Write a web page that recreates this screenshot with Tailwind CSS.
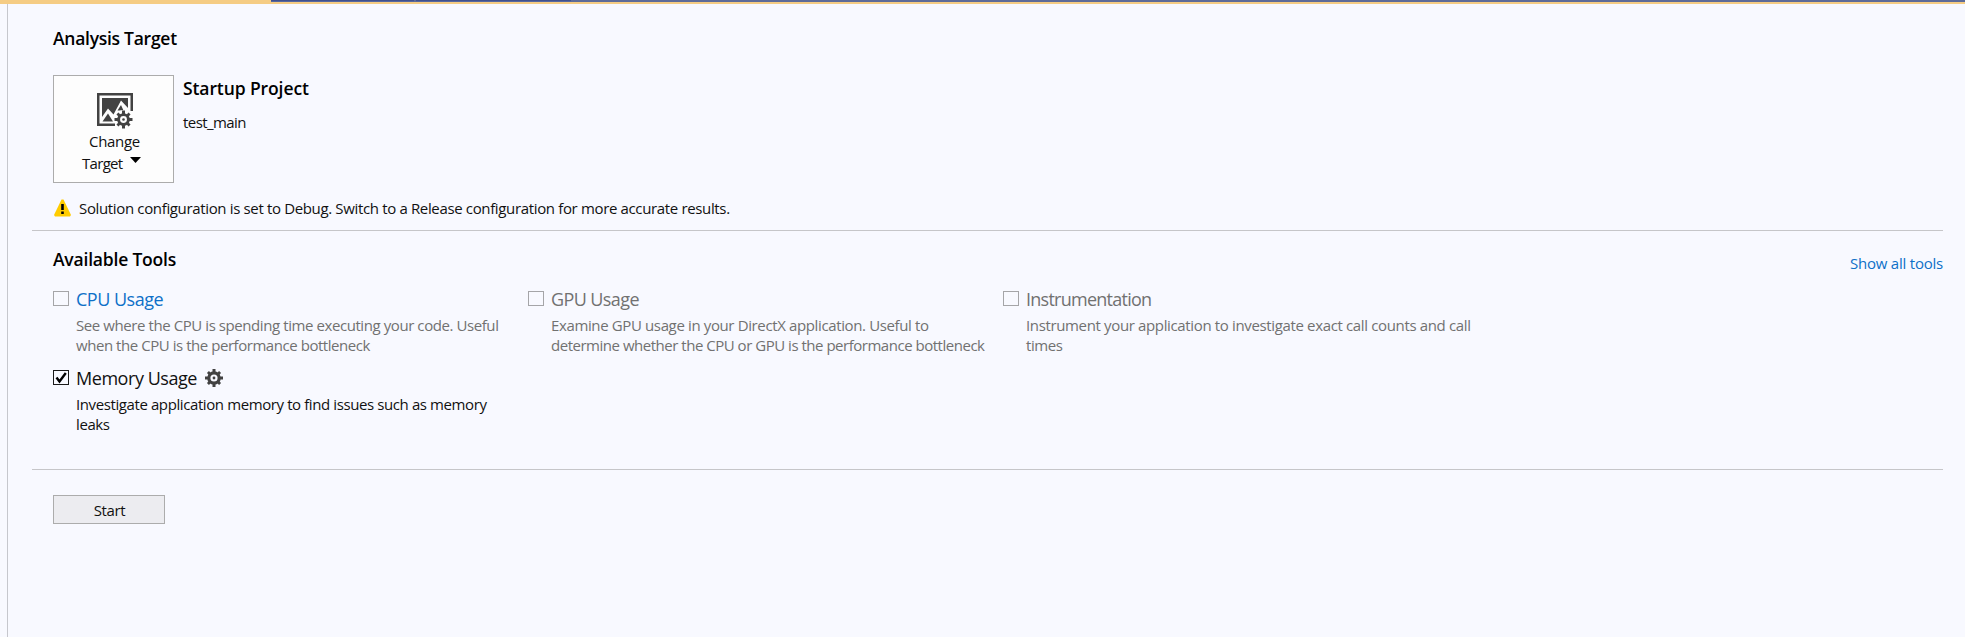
<!DOCTYPE html>
<html lang="en">
<head>
<meta charset="utf-8">
<title>Performance Profiler</title>
<script src="https://cdn.jsdelivr.net/npm/@tailwindcss/browser@4"></script>
</head>
<body class="flex h-[637px] flex-col overflow-hidden bg-[#f8f9ff] font-['Open_Sans','Noto_Sans',sans-serif] text-[15px] leading-5 text-[#111]">
  <header class="flex h-1 shrink-0 bg-[#f5cc84]">
    <div class="w-[271px]"></div>
    <div class="h-0.5 w-[143px] border-b border-[#56679f] bg-[#40508d]"></div>
    <div class="h-0.5 w-[2px] bg-[#5d6b99]"></div>
    <div class="h-0.5 w-[155px] border-b border-[#56679f] bg-[#40508d]"></div>
    <div class="h-0.5 flex-1 bg-[#5d6b99]"></div>
  </header>
  <main class="ml-[7px] flex-1 border-l border-[#c6c7cd] pr-[22px] pl-6">
    <section class="h-[227px] border-b border-[#c6c6c9] pt-[22px] pl-[21px]">
      <h1 class="text-[17.5px] leading-6 font-semibold tracking-[-0.27px] whitespace-nowrap text-black">Analysis Target</h1>
      <div class="mt-[25px] flex">
        <button class="flex h-[108px] w-[121px] flex-col items-center border border-[#acacac] bg-[#fdfdfd] pt-[17px]">
          <svg class="ml-[2px] h-9 w-9" viewBox="0 0 36 36">
            <path fill="#424242" fill-rule="evenodd" d="M0 0h36v18h-2.500V2.500H2.500V30.500H18V33H0zM5 5H31V15L24 7.500 16.500 21.500 11 15.500 5 24z"/>
            <path fill="#424242" d="m5.500 28.500 5.500-8 5 8zM20.500 17.500 24 12l2.500 5.500z"/>
            <circle cx="26.500" cy="26.500" r="9.500" fill="#fdfdfd"/>
            <g transform="translate(26.500 26.500)" fill="#424242">
              <circle r="4.900" fill="none" stroke="#424242" stroke-width="2.900"/>
              <circle r="1.300"/>
              <g id="teeth"><path d="M-1.500-9h3v4h-3zM-1.500 5h3v4h-3zM-9-1.500h4v3h-4zM5-1.500h4v3H5z"/></g>
              <use href="#teeth" transform="rotate(45) scale(.95)"/>
            </g>
          </svg>
          <span class="mt-px ml-[2px] h-[22px] leading-[22px] tracking-[-0.3px]">Change</span>
          <span class="mr-[4px] flex h-[22px] gap-[7.500px] leading-[22px] tracking-[-0.7px]">Target<svg class="mt-[5px] h-[6px] w-[11px]" viewBox="0 0 11 6"><path d="M0 0h11L5.500 6z"/></svg></span>
        </button>
        <div class="ml-[9px] whitespace-nowrap">
          <h2 class="mt-px text-[17.5px] leading-6 font-semibold tracking-[-0.1px] text-black">Startup Project</h2>
          <p class="mt-3 tracking-[-0.57px]">test_main</p>
        </div>
      </div>
      <div class="mt-[15px] flex gap-2">
        <svg class="mt-px ml-[1px] h-[18px] w-[17px]" viewBox="0 0 17 18"><path fill="#ffcc00" d="M7.500.5h2L17 16l-1 1.500H1L0 16z"/><path d="M7.200 5h2.600v6H7.200zM7.200 12.500h2.600V15H7.200z"/></svg>
        <p class="whitespace-nowrap tracking-[-0.35px]">Solution configuration is set to Debug. Switch to a Release configuration for more accurate results.</p>
      </div>
    </section>
    <section class="h-[239px] border-b border-[#c6c6c9] pt-4 pl-[21px]">
      <div class="flex justify-between whitespace-nowrap">
        <h2 class="text-[17.5px] leading-6 font-semibold tracking-[-0.2px] text-black">Available Tools</h2>
        <a class="mt-[6px] h-5 tracking-[-0.22px] text-[#0e70c8]">Show all tools</a>
      </div>
      <div class="mt-[14px] grid grid-cols-[475px_475px_475px] gap-y-[11px] whitespace-nowrap text-[#717171]">
        <article>
          <div class="flex gap-[7px] text-[18px] leading-6"><span class="mt-1 h-[15px] w-4 border border-[#a5a5a8]"></span><h3 class="tracking-[-0.5px] text-[#0e70c8]">CPU Usage</h3></div>
          <p class="mt-1 ml-[23px]"><span class="tracking-[-0.42px]">See where the CPU is spending time executing your code. Useful</span><br><span class="tracking-[-0.45px]">when the CPU is the performance bottleneck</span></p>
        </article>
        <article>
          <div class="flex gap-[7px] text-[18px] leading-6"><span class="mt-1 h-[15px] w-4 border border-[#a5a5a8]"></span><h3 class="tracking-[-0.6px]">GPU Usage</h3></div>
          <p class="mt-1 ml-[23px]"><span class="tracking-[-0.37px]">Examine GPU usage in your DirectX application. Useful to</span><br><span class="tracking-[-0.48px]">determine whether the CPU or GPU is the performance bottleneck</span></p>
        </article>
        <article>
          <div class="flex gap-[7px] text-[18px] leading-6"><span class="mt-1 h-[15px] w-4 border border-[#a5a5a8]"></span><h3 class="tracking-[-0.74px]">Instrumentation</h3></div>
          <p class="mt-1 ml-[23px]"><span class="tracking-[-0.355px]">Instrument your application to investigate exact call counts and call</span><br><span class="tracking-[-0.4px]">times</span></p>
        </article>
        <article class="text-[#111]">
          <div class="flex gap-[7px] text-[18px] leading-6"><span class="mt-1 h-[15px] w-4 border border-[#1a1a1a]"><svg class="h-[13px] w-[14px]" viewBox="0 0 14 13"><path d="m2.500 6.500 3 4L11.800 2" fill="none" stroke="#000" stroke-width="2.400"/></svg></span><h3 class="w-[122px] tracking-[-0.45px]">Memory Usage</h3>
            <svg class="mt-[3px] h-[18px] w-[18px]" viewBox="-9 -9 18 18" fill="#424242"><circle r="5.200" fill="none" stroke="#424242" stroke-width="3.200"/><circle r="1.400"/><path id="cog" d="M-1.500-9h3v4h-3zM-1.500 5h3v4h-3zM-9-1.500h4v3h-4zM5-1.500h4v3H5z"/><use href="#cog" transform="rotate(45) scale(.95)"/></svg></div>
          <p class="mt-1 ml-[23px]"><span class="tracking-[-0.4px]">Investigate application memory to find issues such as memory</span><br><span class="tracking-[-0.4px]">leaks</span></p>
        </article>
      </div>
    </section>
    <footer class="pt-[25px] pl-[21px]">
      <button class="h-[29px] w-[112px] border border-[#acacac] bg-[#ececf0] pt-px pl-px tracking-[-0.4px]">Start</button>
    </footer>
  </main>
</body>
</html>
